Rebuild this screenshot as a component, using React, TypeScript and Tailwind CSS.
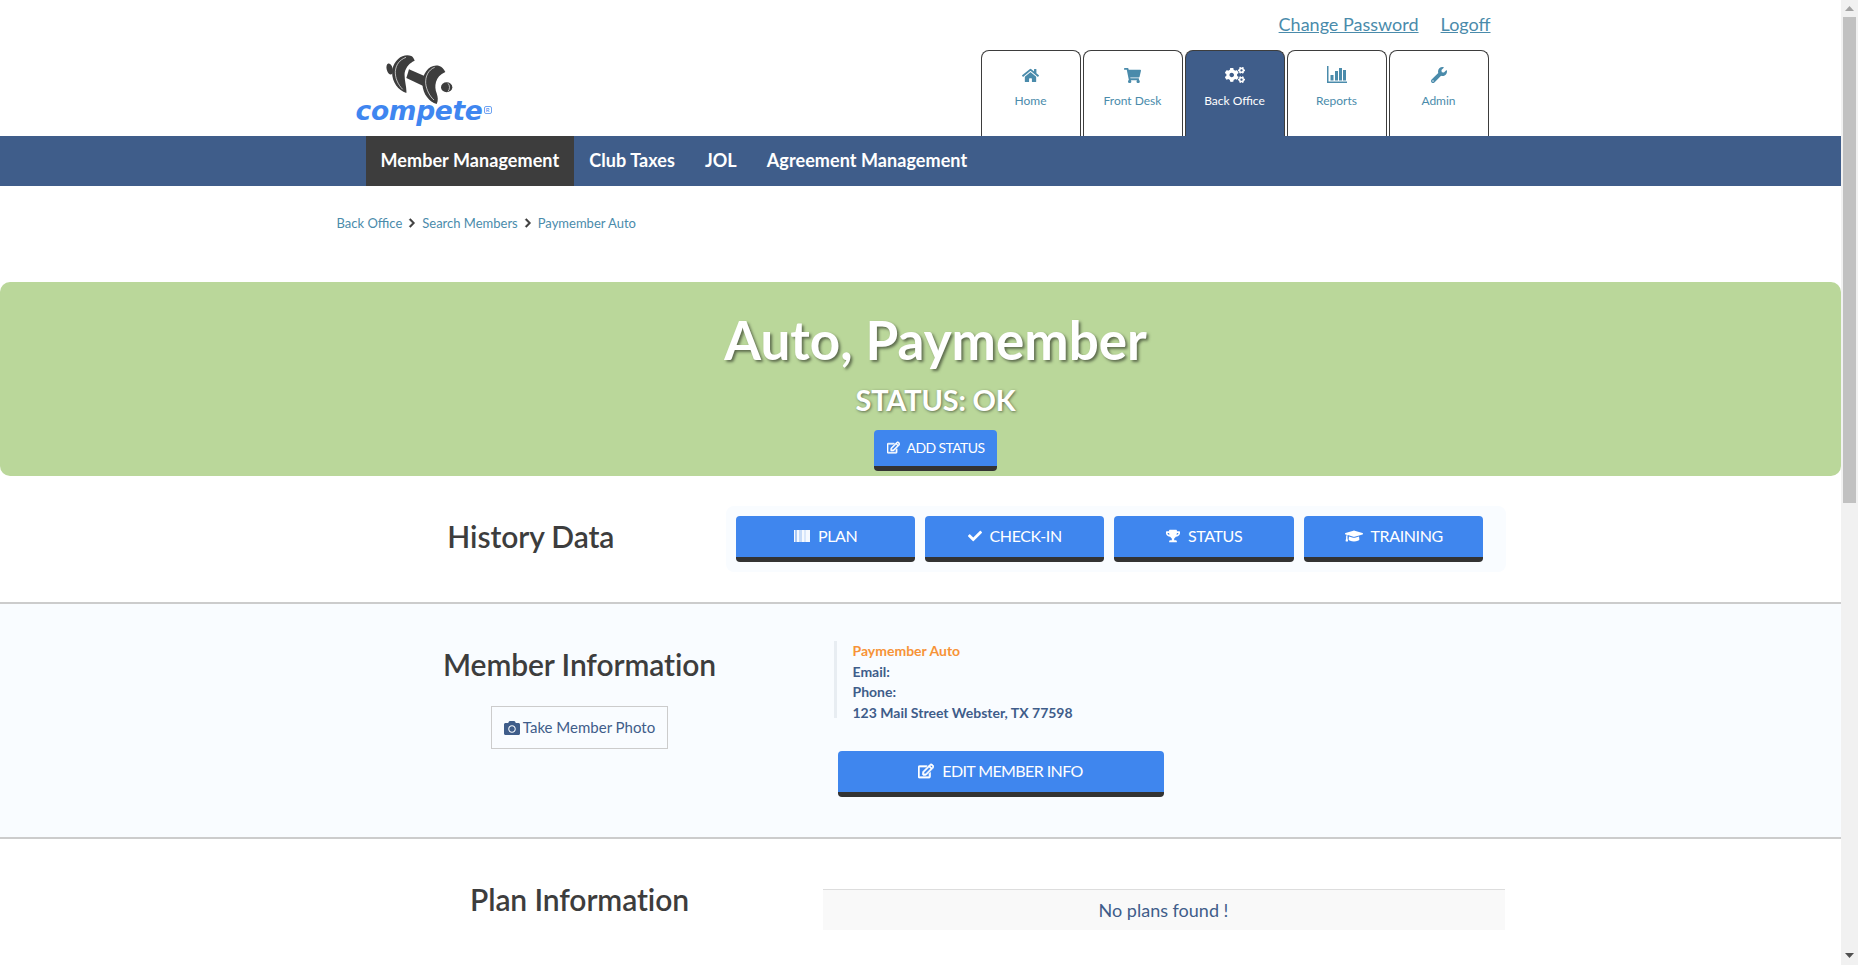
import React from "react";
import { FaHome, FaShoppingCart, FaCogs, FaWrench, FaRegEdit, FaCheck, FaTrophy, FaGraduationCap, FaCamera, FaChevronRight } from "react-icons/fa";

const Bars = () => (
  <svg width="20" height="18" viewBox="0 0 20 18" fill="currentColor">
    <path d="M0 0h1.5v15.5H20V17H0z" />
    <rect x="3.5" y="9" width="3" height="5.5" />
    <rect x="8" y="5" width="3" height="9.5" />
    <rect x="12" y="2" width="3" height="12.5" />
    <rect x="16" y="4" width="3" height="10.5" />
  </svg>
);

const tabs = [
  { label: "Home", icon: <FaHome size={17} /> },
  { label: "Front Desk", icon: <FaShoppingCart size={17} /> },
  { label: "Back Office", icon: <FaCogs size={20} />, active: true },
  { label: "Reports", icon: <Bars /> },
  { label: "Admin", icon: <FaWrench size={16} /> },
];

const PlanIcon = () => (
  <svg width="16" height="12" viewBox="0 0 16 12">
    <rect width="16" height="12" fill="#ffffff" opacity="0.95" />
    <rect x="1" width="2" height="12" fill="#a9c8f5" />
    <rect x="5" width="3" height="12" fill="#c5daf8" />
    <rect x="10" width="2" height="12" fill="#d9e7fb" />
  </svg>
);

function Logo() {
  return (
    <div className="ml-[20px] mt-[4px] w-[136px] flex flex-col">
      <svg width="70" height="50" viewBox="130 40 210 150" className="ml-[28px]" fill="#3d3d3d">
        <ellipse cx="147" cy="85" rx="9" ry="17" transform="rotate(-15 147 85)" />
        <path d="M212 46 C188 38 163 55 155 85 C150 118 170 148 197 157 C199 140 190 118 192 96 C196 78 208 66 222 60 C220 54 217 49 212 46Z" />
        <path d="M196 50 C176 58 166 72 164 92 C163 112 172 132 186 146" fill="none" stroke="#ffffff" strokeWidth="2" />
        <polygon points="205,86 272,115 262,143 197,112" />
        <path d="M296 76 C268 68 244 98 245 130 C247 162 266 183 288 190 C293 180 292 170 288 158 C280 138 282 108 314 94 C309 84 303 78 296 76Z" />
        <path d="M282 80 C262 88 254 108 255 128 C257 148 268 168 280 178" fill="none" stroke="#ffffff" strokeWidth="2" />
        <ellipse cx="318" cy="140" rx="17" ry="15" />
        <path d="M322 128 C328 134 328 146 322 152" fill="none" stroke="#ffffff" strokeWidth="2" />
      </svg>
      <div className="flex items-start -mt-[7px] leading-none">
        <span className="font-['DejaVu_Sans',sans-serif] font-bold italic text-[26.5px] leading-[27px] tracking-[-0.3px] text-[#3f86f0]">compete</span>
        <span className="ml-[1px] mt-[9px] w-[8px] h-[8px] border border-[#6ea3f2] rounded-[2px] text-[6px] leading-[6px] text-center text-[#3f86f0]">R</span>
      </div>
    </div>
  );
}

const Btn = ({ icon, label, className = "" }: { icon: React.ReactNode; label: string; className?: string }) => (
  <div className={`flex items-center justify-center bg-[#3f86ee] border-b-[5px] border-[#333333] rounded-[4px] text-white uppercase ${className}`}>
    {icon}
    <span>{label}</span>
  </div>
);

export default function App() {
  return (
    <div className="flex h-screen overflow-hidden bg-white font-['Lato','Open_Sans',sans-serif]">
      <main className="flex-1 min-w-0 overflow-hidden">
        <header className="h-[136px] w-[1170px] mx-auto relative">
          <div className="flex justify-end gap-[22px] h-[50px] pt-[11px] pr-[15px] text-[18px] leading-[26px] text-[#4a8bab] underline">
            <span>Change Password</span>
            <span>Logoff</span>
          </div>
          <div className="flex justify-between items-start">
            <Logo />
            <div className="flex gap-[2px] pr-[17px]">
              {tabs.map((t) => (
                <div
                  key={t.label}
                  className={`w-[100px] h-[86px] flex flex-col items-center pt-[14px] border border-b-0 border-[#3d3d3d] rounded-t-[8px] text-[12px] ${
                    t.active ? "bg-[#3f5d8a] text-white" : "bg-white text-[#4a8bab]"
                  }`}
                >
                  <div className="h-[20px] flex items-center">{t.icon}</div>
                  <div className="mt-[7px] leading-[18px]">{t.label}</div>
                </div>
              ))}
            </div>
          </div>
        </header>

        <nav className="h-[50px] bg-[#3f5d8a]">
          <div className="w-[1170px] mx-auto pl-[30px] flex h-full text-white font-bold text-[18px] tracking-[0.07px]">
            <div className="flex items-center px-[15px] pb-[1px] bg-[#3d3d3d]">Member Management</div>
            <div className="flex items-center px-[15px] pb-[1px]">Club Taxes</div>
            <div className="flex items-center px-[15px] pb-[1px]">JOL</div>
            <div className="flex items-center px-[15px] pb-[1px]">Agreement Management</div>
          </div>
        </nav>

        <div className="h-[96px] w-[1170px] mx-auto pt-[27px] flex items-start text-[13px] leading-[20px] text-[#4a8bab]">
          <div className="flex items-center pl-[1px]">
            <span>Back Office</span>
            <FaChevronRight size={10} strokeWidth={30} className="mx-[5px] text-[#3d3d3d]" />
            <span>Search Members</span>
            <FaChevronRight size={10} strokeWidth={30} className="mx-[5px] text-[#3d3d3d]" />
            <span>Paymember Auto</span>
          </div>
        </div>

        <section className="h-[194px] bg-[#bad79a] rounded-[10px] pl-[30px] flex flex-col items-center text-white">
          <h1 className="mt-[27px] text-[53px] leading-[62px] font-bold [text-shadow:2px_2px_3px_rgba(0,0,0,0.5)]">Auto, Paymember</h1>
          <div className="mt-[11px] text-[29px] leading-[36px] font-bold tracking-[-0.2px] [text-shadow:1px_1px_3px_rgba(0,0,0,0.5)]">STATUS: OK</div>
          <Btn
            icon={<FaRegEdit size={13} strokeWidth={25} className="mr-[7px]" />}
            label="Add Status"
            className="mt-[12px] w-[123px] h-[41px] text-[14px] tracking-[-0.6px] pb-[1px]"
          />
        </section>

        <section className="h-[126px] w-[1170px] mx-auto flex pt-[30px]">
          <h2 className="w-[391px] h-[60px] flex items-center justify-center text-[30px] font-semibold tracking-[-0.1px] text-[#3d3d3d]">History Data</h2>
          <div className="w-[780px] h-[66px] bg-[#f9fcff] rounded-[8px] flex gap-[10px] px-[10px] pt-[10px]">
            <Btn icon={<span className="mr-[8px] flex"><PlanIcon /></span>} label="Plan" className="w-[179px] h-[46px] text-[16px] tracking-[-0.4px] pb-[1px]" />
            <Btn icon={<FaCheck size={14} className="mr-[8px]" />} label="Check-In" className="w-[179px] h-[46px] text-[16px] tracking-[-0.4px] pb-[1px]" />
            <Btn icon={<FaTrophy size={14} className="mr-[8px]" />} label="Status" className="w-[180px] h-[46px] text-[16px] tracking-[-0.4px] pb-[1px]" />
            <Btn icon={<FaGraduationCap size={18} className="mr-[8px]" />} label="Training" className="w-[179px] h-[46px] text-[16px] tracking-[-0.4px] pb-[1px]" />
          </div>
        </section>

        <section className="h-[237px] border-y-2 border-[#cccccc] bg-[#f9fcff] box-border">
          <div className="w-[1170px] mx-auto flex pt-[40px]">
            <div className="w-[488px] flex flex-col items-center">
              <h2 className="text-[30px] leading-[40px] font-semibold tracking-[-0.1px] text-[#3d3d3d]">Member Information</h2>
              <div className="mt-[22px] w-[177px] h-[43px] flex items-center justify-center border border-[#cccccc] text-[15px] text-[#3f5d8a]">
                <FaCamera size={16} className="mr-[3px]" />
                Take Member Photo
              </div>
            </div>
            <div className="pl-[10px]">
              <div className="border-l-[3px] border-[#e8edf2] pl-[16px] text-[14px] leading-[20.5px] font-bold text-[#3f5d8a] h-[77px]">
                <div className="-mt-[3px]">
                  <div className="text-[#f79337]">Paymember Auto</div>
                  <div>Email:</div>
                  <div>Phone:</div>
                  <div>123 Mail Street Webster, TX 77598</div>
                </div>
              </div>
              <Btn
                icon={<FaRegEdit size={16} strokeWidth={25} className="mr-[8px]" />}
                label="Edit Member Info"
                className="mt-[33px] ml-[4px] w-[326px] h-[46px] text-[16px] tracking-[-0.6px] pb-[1px]"
              />
            </div>
          </div>
        </section>

        <section className="w-[1170px] mx-auto flex pt-[50px]">
          <h2 className="w-[487px] pl-[1px] h-[26px] flex items-center justify-center text-[30px] font-semibold tracking-[-0.1px] text-[#3d3d3d] -mt-[3px]">Plan Information</h2>
          <div className="w-[682px] h-[41px] flex items-center justify-center border-t border-[#dddddd] bg-[#f9f9f9] text-[18px] text-[#3f5d8a]">No plans found !</div>
        </section>
      </main>

      <aside className="w-[17px] shrink-0 bg-[#f1f1f1] flex flex-col items-center h-screen">
        <svg width="9" height="5" viewBox="0 0 9 5" className="mt-[6px] shrink-0 fill-[#a3a3a3]"><path d="M4.5 0L9 5H0z" /></svg>
        <div className="w-[13px] h-[486px] mt-[6px] bg-[#c1c1c1]" />
        <div className="flex-1" />
        <svg width="9" height="5" viewBox="0 0 9 5" className="mb-[7px] shrink-0 fill-[#505050]"><path d="M0 0h9L4.5 5z" /></svg>
      </aside>
    </div>
  );
}
